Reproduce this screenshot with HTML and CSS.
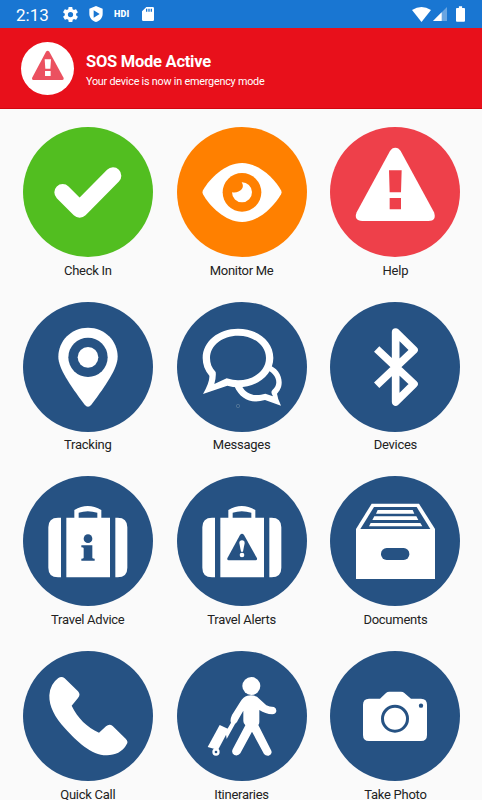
FILE: index.html
```html
<!DOCTYPE html>
<html lang="en">
  <head>
    <meta charset="utf-8">
    <title>SOS Mode</title>
    <link rel="stylesheet" href="styles.css">
  </head>
  <body>
    <div id="app">
      <div class="statusbar">
        <span class="time">2:13</span>
        <svg class="gear" viewBox="2 2 20 20"><path d="M19.4 13c0-.3.1-.6.1-1s0-.7-.1-1l2.1-1.6c.2-.2.2-.4.1-.6l-2-3.500c-.1-.2-.4-.3-.6-.2l-2.500 1c-.5-.4-1.100-.7-1.700-1l-.4-2.600c0-.3-.2-.5-.5-.5h-4c-.2 0-.5.2-.5.4l-.4 2.700c-.6.200-1.100.6-1.700 1l-2.500-1c-.2-.1-.5 0-.6.2l-2 3.500c-.1.200 0 .4.200.6L4.500 11c0 .3-.1.700-.1 1s0 .7.1 1l-2.100 1.600c-.2.200-.2.400-.1.600l2 3.500c.1.200.4.300.6.200l2.500-1c.5.4 1.100.7 1.700 1l.4 2.600c0 .3.300.5.500.5h4c.3 0 .5-.2.5-.4l.4-2.700c.6-.2 1.100-.6 1.700-1l2.500 1c.2.100.5 0 .6-.2l2-3.500c.1-.2 0-.4-.2-.6L19.400 13zM12 15.500a3.500 3.500 0 1 1 0-7 3.500 3.500 0 0 1 0 7z"/></svg>
        <svg class="shield" viewBox="0 0 42 48"><path fill-rule="evenodd" d="M21 0L41 8V23C41 35 33 44 21 48C9 44 1 35 1 23V8ZM14 13V35L32 24Z"/></svg>
        <span class="hdi">HDI</span>
        <svg class="sd" viewBox="0 0 36 42"><path fill-rule="evenodd" d="M13 0H32Q36 0 36 4V38Q36 42 32 42H4Q0 42 0 38V13ZM12 5V14H16V5ZM19 5V14H23V5ZM26 5V14H30V5Z"/></svg>
        <svg class="wifi" viewBox="0 0 56 44"><path d="M0 9Q28-9 56 9L28 44Z"/></svg>
        <svg class="signal" viewBox="0 0 42 42"><path opacity=".35" d="M42 0V42H0Z"/><path d="M26 16V42H0Z"/></svg>
        <svg class="battery" viewBox="0 0 28 48"><path d="M9 0H19V5H25Q28 5 28 8V45Q28 48 25 48H3Q0 48 0 45V8Q0 5 3 5H9Z"/></svg>
      </div>
      <div class="banner">
        <div class="banner-icon">
          <svg viewBox="63 126 159 159"><path fill="#eb5160" d="M138 155Q143 149 148 155L191 234Q192 240 187 240H100Q95 240 96 234Z"/><path fill="#fff" d="M134 178H153L151 206H136ZM135 213H152V228H135Z"/></svg>
        </div>
        <div class="banner-text">
          <h1>SOS Mode Active</h1>
          <p>Your device is now in emergency mode</p>
        </div>
      </div>
      <div class="grid">
        <div class="item">
          <div class="circle green">
            <svg viewBox="38 21 390 390"><path class="check" d="M157 217L208 268L308 167"/></svg>
          </div>
          <span>Check In</span>
        </div>
        <div class="item">
          <div class="circle orange">
            <svg viewBox="35 21 390 390"><path d="M113 223Q110 217 113 211C133 175 180 129 230 129S327 175 347 211Q350 217 347 223C327 259 280 306 230 306S133 259 113 223Z"/><circle class="cut" cx="230" cy="217" r="58"/><path d="M229 187A30 30 0 1 1 200 217C222 221 241 204 229 187Z"/></svg>
          </div>
          <span>Monitor Me</span>
        </div>
        <div class="item">
          <div class="circle red">
            <svg viewBox="30 21 390 390"><path d="M210 93Q216 83 226 83T242 93L342 277Q351 303 325 303H127Q100 301 110 277Z"/><path class="cut" d="M207 151H245L243 217H209ZM209 234H243V268H209Z"/></svg>
          </div>
          <span>Help</span>
        </div>
        <div class="item">
          <div class="circle">
            <svg viewBox="38 21 390 390"><path d="M233 98C283 98 322 137 322 185C322 219 288 269 243 329Q233 341 223 329C178 269 144 219 144 185C144 137 183 98 233 98Z"/><circle class="cut" cx="233" cy="187" r="59"/><circle cx="233" cy="187" r="31"/></svg>
          </div>
          <span>Tracking</span>
        </div>
        <div class="item">
          <div class="circle">
            <svg viewBox="35 21 390 390"><path d="M307 209C335 216 350 241 349 264C349 277 342 289 335 296Q337 312 347 332L299 315C258 327 225 314 207 273L229 272C242 298 268 306 300 296L323 304Q314 291 322 284C342 267 333 238 307 226Z"/><path d="M218 101C277 101 324 139 324 189S276 277 218 277Q203 277 186 272L113 297Q134 260 132 242C119 227 112 209 112 189C112 139 159 101 218 101Z"/><path class="cut" d="M218 122C265 122 302 151 302 189S265 256 218 256Q204 256 184 250L147 267Q153 245 151 231C139 219 134 205 134 189C134 151 171 122 218 122Z"/><circle class="dot" cx="218" cy="333" r="5"/></svg>
          </div>
          <span>Messages</span>
        </div>
        <div class="item">
          <div class="circle">
            <svg viewBox="30 21 390 390"><path class="bluetooth" d="M170 162L282 267L227 321V111L282 165L170 271"/></svg>
          </div>
          <span>Devices</span>
        </div>
        <div class="item">
          <div class="circle">
            <svg viewBox="38 18 390 390"><path fill-rule="evenodd" d="M192 143V120Q232 96 273 120V143H299V322H168V143ZM205 143H261V128Q232 119 205 128ZM152 143V322H143Q114 322 114 293V172Q114 143 143 143ZM315 143H322Q351 143 351 172V293Q351 322 322 322H315Z"/><circle class="cut" cx="233" cy="206" r="13"/><path class="cut" d="M213 226H246V263Q246 266 253 266V272H213V266Q220 266 220 263V235Q220 232 213 232Z"/></svg>
          </div>
          <span>Travel Advice</span>
        </div>
        <div class="item">
          <div class="circle">
            <svg viewBox="500 18 390 390"><path fill-rule="evenodd" d="M654 143V120Q694 96 735 120V143H761V322H630V143ZM667 143H723V128Q694 119 667 128ZM614 143V322H605Q576 322 576 293V172Q576 143 605 143ZM777 143H784Q813 143 813 172V293Q813 322 784 322H777Z"/><path class="cut" d="M689 195Q695 188 701 195L740 265Q741 271 736 271H655Q650 271 651 265Z"/><path d="M687 219Q687 211 695 211T703 219L698 245H692Z"/><circle cx="695" cy="255" r="7"/></svg>
          </div>
          <span>Travel Alerts</span>
        </div>
        <div class="item">
          <div class="circle">
            <svg viewBox="30 18 390 390"><path d="M155 101H297L345 177V327H108V177Z"/><path class="cut" d="M162 111H290L331 177H121Z"/><path d="M173 120H278L283 131H168ZM163 139H289L295 150H157ZM152 159H301L307 169H147Z"/><rect class="cut" x="183" y="234" width="85" height="36" rx="17"/></svg>
          </div>
          <span>Documents</span>
        </div>
        <div class="item">
          <div class="circle">
            <svg viewBox="38 18 390 390"><path d="M144 99Q154 92 163 100L203 139Q212 149 203 159L184 182C202 219 230 247 266 263L287 244Q297 235 307 243L346 281Q355 290 349 298C337 321 314 331 290 331C244 332 200 290 163 249C134 217 116 185 117 151Q119 117 144 99Z"/></svg>
          </div>
          <span>Quick Call</span>
        </div>
        <div class="item">
          <div class="circle">
            <svg viewBox="500 18 390 390"><circle cx="723" cy="123" r="27"/><path d="M711 152Q728 149 740 155L768 181Q777 186 791 186Q799 190 798 199Q796 208 786 208Q765 207 747 195V231Q747 237 744 240L783 317Q787 328 775 332Q766 333 761 327L725 260L690 325Q683 334 672 330Q662 324 667 313L705 241Q699 236 699 228V197L683 225Q681 232 674 237L649 282L646 261L662 233Q658 225 665 210L690 170Q699 155 711 152Z"/><path d="M628 240L646 248L656 253L623 315L592 306Z"/><circle cx="617" cy="321" r="11"/><circle class="cut" cx="617" cy="321" r="4"/></svg>
          </div>
          <span>Itineraries</span>
        </div>
        <div class="item">
          <div class="circle">
            <svg viewBox="30 18 390 390"><path d="M180 161L198 144Q202 140 208 140H243Q249 140 253 144L273 161H303Q321 161 321 179V270Q321 288 303 288H147Q129 288 129 270V179Q129 161 147 161Z"/><circle class="lens" cx="225" cy="221" r="37.500"/><circle class="cut" cx="303" cy="182" r="6.500"/></svg>
          </div>
          <span>Take Photo</span>
        </div>
      </div>
    </div>
  </body>
</html>
```

FILE: styles.css
```css
* {
  box-sizing: border-box;
}

body {
  margin: 0;
  background: #fafafa;
  font-family: Roboto, sans-serif;
  color: #222;
}

svg {
  display: block;
  fill: #fff;
}

#app {
  height: 800px;
  overflow: hidden;
}

.statusbar {
  display: flex;
  align-items: center;
  height: 28px;
  padding: 0 17px 0 16px;
  background: #1976d2;
  color: #fff;
}

.time {
  width: 47px;
  font-size: 17px;
  line-height: 28px;
  padding-top: 2px;
}

.gear {
  width: 15px;
  height: 15px;
}

.shield {
  width: 14px;
  height: 16px;
  margin-left: 11px;
}

.hdi {
  width: 17px;
  margin-left: 11px;
  font-size: 9px;
  font-weight: 900;
  letter-spacing: .2px;
}

.sd {
  width: 12px;
  height: 14px;
  margin-left: 11px;
}

.wifi {
  width: 19px;
  height: 15px;
  margin-left: auto;
}

.signal {
  width: 14px;
  height: 14px;
  margin-left: 2px;
}

.battery {
  width: 9px;
  height: 16px;
  margin-left: 9px;
}

.banner {
  display: flex;
  align-items: center;
  height: 81px;
  padding-left: 21px;
  background: #e8101b;
  border-bottom: 1px solid #d2060f;
  color: #fff;
}

.banner-icon {
  width: 53px;
  height: 53px;
  border-radius: 50%;
  background: #fff;
}

.banner-text {
  margin-left: 12px;
  padding-top: 6px;
}

.banner h1 {
  margin: 0;
  font-size: 16.500px;
  line-height: 20px;
  font-weight: 700;
  letter-spacing: -.25px;
}

.banner p {
  margin: 2px 0 0;
  font-size: 10.800px;
  line-height: 16px;
  letter-spacing: -.22px;
}

.grid {
  display: grid;
  grid-template-columns: repeat(3, 130px);
  grid-auto-rows: 174.700px;
  column-gap: 23.800px;
  padding: 18px 0 0 22.800px;
}

.item {
  display: flex;
  flex-direction: column;
  align-items: center;
  font-size: 13px;
  line-height: 18px;
  letter-spacing: -.27px;
}

.item span {
  margin-top: 4.500px;
}

.circle {
  --color: #265283;
  width: 130px;
  height: 130px;
  border-radius: 50%;
  background: var(--color);
}

.green {
  --color: #52be20;
}

.orange {
  --color: #ff8000;
}

.red {
  --color: #ee404a;
}

.cut {
  fill: var(--color);
}

.check {
  fill: none;
  stroke: #fff;
  stroke-width: 50;
  stroke-linecap: round;
  stroke-linejoin: round;
}

.bluetooth {
  fill: none;
  stroke: #fff;
  stroke-width: 23;
  stroke-linejoin: round;
}

.dot {
  fill: none;
  stroke: #60809f;
  stroke-width: 2;
}

.lens {
  stroke: var(--color);
  stroke-width: 9;
}
```
